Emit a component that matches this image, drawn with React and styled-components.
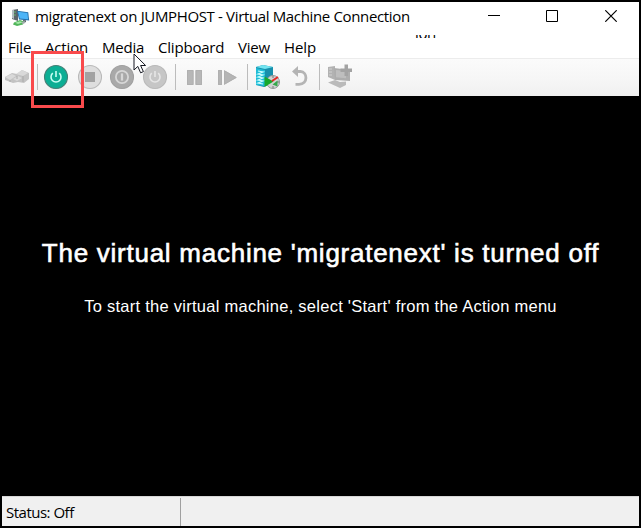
import React from "react";
import styled, { createGlobalStyle } from "styled-components";

const GlobalStyle = createGlobalStyle`
  * { box-sizing: border-box; }
  html, body { margin: 0; padding: 0; overflow: hidden; }
`;

const Window = styled.main`
  position: relative;
  display: grid;
  grid-template-rows: 32px 24px 38px 400px 30px;
  width: 641px;
  height: 528px;
  border: 2px solid #000;
  background: #000;
  color: #000;
  font-family: "Open Sans", "Noto Sans", sans-serif;
  font-size: 15px;
  white-space: nowrap;
`;

const TitleBar = styled.header`
  display: flex;
  align-items: center;
  padding-left: 9px;
  background: #fff;
`;

const Title = styled.h1`
  flex: 1;
  margin: 0 0 4px 4px;
  font-size: 15px;
  line-height: 20px;
  font-weight: 400;
  letter-spacing: ${(p) => p.$spacing}px;
`;

const CaptionButton = styled.button`
  display: flex;
  align-items: center;
  justify-content: center;
  width: 58.5px;
  height: 28px;
  margin-bottom: 4px;
  padding: 0;
  border: 0;
  background: none;
  &:last-child { margin-right: -1px; }
`;

const MenuBar = styled.nav`
  display: flex;
  align-items: flex-start;
  padding: 3px 0 0 6px;
  background: #fff;
`;

const MenuItem = styled.span`
  width: ${(p) => p.$width}px;
  line-height: 20px;
  letter-spacing: ${(p) => p.$spacing}px;
`;

const ClippedLabel = styled.span`
  height: 3px;
  margin: -2px 0 0 73px;
  overflow: hidden;
  display: flex;
  align-items: flex-end;
  line-height: 10px;
  letter-spacing: -0.4px;
`;

const ToolBar = styled.div`
  display: flex;
  align-items: center;
  padding: 0 0 2px 2px;
  border-top: 1px solid #ececec;
  background: linear-gradient(#fbfbfb, #f6f6f6 55%, #f0f0f0);
`;

const Tool = styled.span`
  display: flex;
  width: ${(p) => p.$width || 26}px;
  height: 26px;
  margin-right: ${(p) => p.$gap || 0}px;
  svg { display: block; flex: none; }
`;

const Separator = styled.i`
  width: 1px;
  height: 26px;
  margin-right: ${(p) => p.$gap}px;
  background: #bcbcbc;
`;

const Screen = styled.section`
  display: flex;
  flex-direction: column;
  align-items: center;
  padding-top: 142px;
  background: #000;
  color: #fff;
  font-family: "Liberation Sans", Arial, sans-serif;
`;

const Headline = styled.h2`
  margin: 0;
  font-size: 26px;
  line-height: 30px;
  font-weight: 400;
  letter-spacing: 0.74px;
  -webkit-text-stroke: 0.6px #fff;
`;

const Hint = styled.p`
  margin: 28px 0 0;
  font-size: 16.5px;
  line-height: 20px;
  letter-spacing: 0.26px;
`;

const StatusBar = styled.footer`
  display: flex;
  background: #f0f0f0;
  border-top: 1px solid #d7d7d7;
`;

const StatusPane = styled.div`
  width: 179px;
  margin-top: 1px;
  padding: 3px 0 0 4px;
  border-right: 1px solid #a0a0a0;
  line-height: 22px;
  letter-spacing: -0.5px;
`;

const Highlight = styled.div`
  position: absolute;
  left: 29px;
  top: 49px;
  width: 53px;
  height: 57px;
  border: 3px solid #f94a4c;
`;

const Cursor = styled.svg`
  position: absolute;
  left: 131px;
  top: 51px;
`;

const AppIcon = () => (
  <svg width="20" height="20" viewBox="0 0 20 20">
    <path d="M1 2l6-1v12l-6-2z" fill="#5b646b" />
    <path d="M1 2l2 0v9l-2-1z" fill="#b2bdc3" />
    <path d="M2.8 4h2M2.8 7h2" stroke="#66bd72" />
    <path d="M6 2.7l11.2 1.5 1 8.2L8 11.5z" fill="#246faa" />
    <path d="M7 3.8l9.4 1.2.7 6.3-8.4-.8z" fill="#4db4f7" />
    <path d="M12 12l3 .3v2l-3-.5z" fill="#59656d" />
    <path d="M3 14.5l6-2.4 4 1.5-1 3-6 1.4-4-1.5z" fill="#51b55a" />
    <path d="M4 14.8l5-1.5 3 1-5 1.6z" fill="#a5e7a7" />
    <path d="M11 15l3-1" stroke="#a2aaae" strokeWidth="2" />
  </svg>
);

const KeysIcon = () => (
  <svg width="26" height="26" viewBox="0 0 26 26">
    <path d="M1 13l7-4 5 1 5-4 7 3v6l-5 4-6-1-5 1-8-3z" fill="#c2c2c2" />
    <path d="M1 13l7-3 4 2-6 4zM12 10l6-4 6 3-5 3zM9 15l5-3 4 2-5 3z" fill="#d9d9d9" />
    <path d="M6 16v2M13 12v3M19 12v6" stroke="#aaa" />
  </svg>
);

const RoundIcon = ({ kind, green }) => (
  <svg width="26" height="26" viewBox="0 0 26 26">
    <circle
      cx="13" cy="13" r="11.5"
      fill={green ? "#0cae94" : kind === "stop" ? "#dedede" : kind === "shutdown" ? "#a9a9a9" : "#c6c6c6"}
      stroke={green ? "#477f76" : kind === "shutdown" ? "#a0a0a0" : "#b9b9b9"}
      strokeWidth="1.1"
    />
    {kind === "stop" && <rect x="8" y="8" width="10" height="10" fill="#a2a2a2" />}
    {kind === "shutdown" && (
      <g fill="none" stroke="#d7d7d7" strokeWidth="1.8">
        <circle cx="13" cy="13" r="6.1" />
        <path d="M13 9.4v7.2" strokeWidth="2.3" />
      </g>
    )}
    {kind === "power" && (
      <g fill="none" stroke={green ? "#c8fff4" : "#e6e6e6"} strokeWidth="1.6">
        <path d="M9.8 9.2a5 5 0 1 0 6.4 0" />
        <path d="M13 7v6" />
      </g>
    )}
  </svg>
);

const PauseIcon = () => (
  <svg width="16" height="26" viewBox="0 0 16 26">
    <path d="M0 6h6.5v15H0zM8.500 6H15v15H8.500z" fill="#b7b7b7" />
    <path d="M.5 6.5H6v14H.5zM9 6.5h5.5v14H9z" fill="none" stroke="#b0b0b0" />
  </svg>
);

const ResetIcon = () => (
  <svg width="20" height="26" viewBox="0 0 20 26">
    <path d="M0 6h4v15H0zM6 6l13 7.5L6 21z" fill="#b5b5b5" />
    <path d="M.5 6.5h3v14h-3zM6.5 7l11.5 6.5-11.5 6.5z" fill="none" stroke="#b0b0b0" />
  </svg>
);

const CheckpointIcon = () => (
  <svg width="26" height="26" viewBox="0 0 26 26">
    <path d="M1 3l7-2 10 2v16l-9 4-8-2z" fill="#168fac" />
    <path d="M1 3l7-2 10 2-8 2z" fill="#73e4f0" />
    <path d="M1 4l9 2v16l-9-1z" fill="#20bdd7" />
    <path d="M3 7l5 1-5 2 5 1-5 2 5 1-5 2 5 1-5 2 5 1" fill="none" stroke="#ceffff" strokeWidth="1.2" />
    <circle cx="18" cy="18" r="6.5" fill="#d0d3d2" stroke="#929796" />
    <path d="M18 12v2M18 22v2M12 18h2M22 18h2" stroke="#777" />
    <path d="M9.5 12.5l9 5-9 5.500z" fill="#16a82b" />
    <path d="M17 17l6-4" stroke="#e52824" strokeWidth="2" />
    <path d="M17.5 20.500l5-4v6z" fill="#36a84c" />
  </svg>
);

const RevertIcon = () => (
  <svg width="18" height="26" viewBox="0 0 18 26">
    <path d="M4 7.5h4.5c7 0 8 12.8-1.5 12.8H3.5" fill="none" stroke="#b4b4b4" strokeWidth="2.8" />
    <path d="M0 7.5l6-5.5v11z" fill="#b4b4b4" />
  </svg>
);

const EnhancedIcon = () => (
  <svg width="26" height="26" viewBox="0 0 26 26">
    <path d="M1 3l7-1v14l-7-3z" fill="#b2b2b2" />
    <path d="M7 4l16 2v11L8 16z" fill="#adadad" />
    <path d="M2 5h3M2 8h3M2 11h3" stroke="#d2d2d2" />
    <path d="M9 6l10 1.3v7L9 13.3z" fill="#bebebe" />
    <path d="M17.5 0.500h3.5v4h4v3.500h-4v4h-3.500v-4h-4v-3.500h4z" fill="#a3a3a3" />
    <path d="M1 18.500l7-2.500 5 2 6-.5v3.500l-6 3z" fill="#bababa" />
  </svg>
);

const menus = [
  ["File", 37, -0.1],
  ["Action", 57, -0.15],
  ["Media", 56, -0.2],
  ["Clipboard", 80, -0.2],
  ["View", 46, -0.2],
  ["Help", 58, -0.1],
];

export default function App() {
  return (
    <Window>
      <GlobalStyle />
      <TitleBar>
        <AppIcon />
        <Title $spacing={-0.35}>migratenext on JUMPHOST - Virtual Machine Connection</Title>
        <CaptionButton aria-label="Minimize">
          <svg width="12" height="12"><path d="M0 5.5h12" stroke="#000" /></svg>
        </CaptionButton>
        <CaptionButton aria-label="Maximize">
          <svg width="12" height="12"><path d="M.5.5h11v11H.5z" fill="none" stroke="#000" /></svg>
        </CaptionButton>
        <CaptionButton aria-label="Close">
          <svg width="12" height="12"><path d="M.3.3l11.4 11.4M11.7.3L.3 11.7" stroke="#000" strokeWidth="1.2" /></svg>
        </CaptionButton>
      </TitleBar>
      <MenuBar>
        {menus.map(([label, width, spacing]) => (
          <MenuItem key={label} $width={width} $spacing={spacing}>{label}</MenuItem>
        ))}
        <ClippedLabel>ion</ClippedLabel>
      </MenuBar>
      <ToolBar>
        <Tool $gap={7}><KeysIcon /></Tool>
        <Separator $gap={5} />
        <Tool $gap={8}><RoundIcon kind="power" green /></Tool>
        <Tool $gap={6}><RoundIcon kind="stop" /></Tool>
        <Tool $gap={7}><RoundIcon kind="shutdown" /></Tool>
        <Tool $gap={7}><RoundIcon kind="power" /></Tool>
        <Separator $gap={11} />
        <Tool $width={16} $gap={15}><PauseIcon /></Tool>
        <Tool $width={20} $gap={9}><ResetIcon /></Tool>
        <Separator $gap={7} />
        <Tool $gap={11}><CheckpointIcon /></Tool>
        <Tool $width={18} $gap={9}><RevertIcon /></Tool>
        <Separator $gap={7} />
        <Tool><EnhancedIcon /></Tool>
      </ToolBar>
      <Screen>
        <Headline>The virtual machine 'migratenext' is turned off</Headline>
        <Hint>To start the virtual machine, select 'Start' from the Action menu</Hint>
      </Screen>
      <StatusBar>
        <StatusPane>Status: Off</StatusPane>
      </StatusBar>
      <Highlight />
      <Cursor width="14" height="22" viewBox="0 0 14 22">
        <path d="M1 1v16l3.8-3.600 2.800 6.400 2.800-1.200-2.800-6.100h5z" fill="#fff" stroke="#161922" />
      </Cursor>
    </Window>
  );
}
